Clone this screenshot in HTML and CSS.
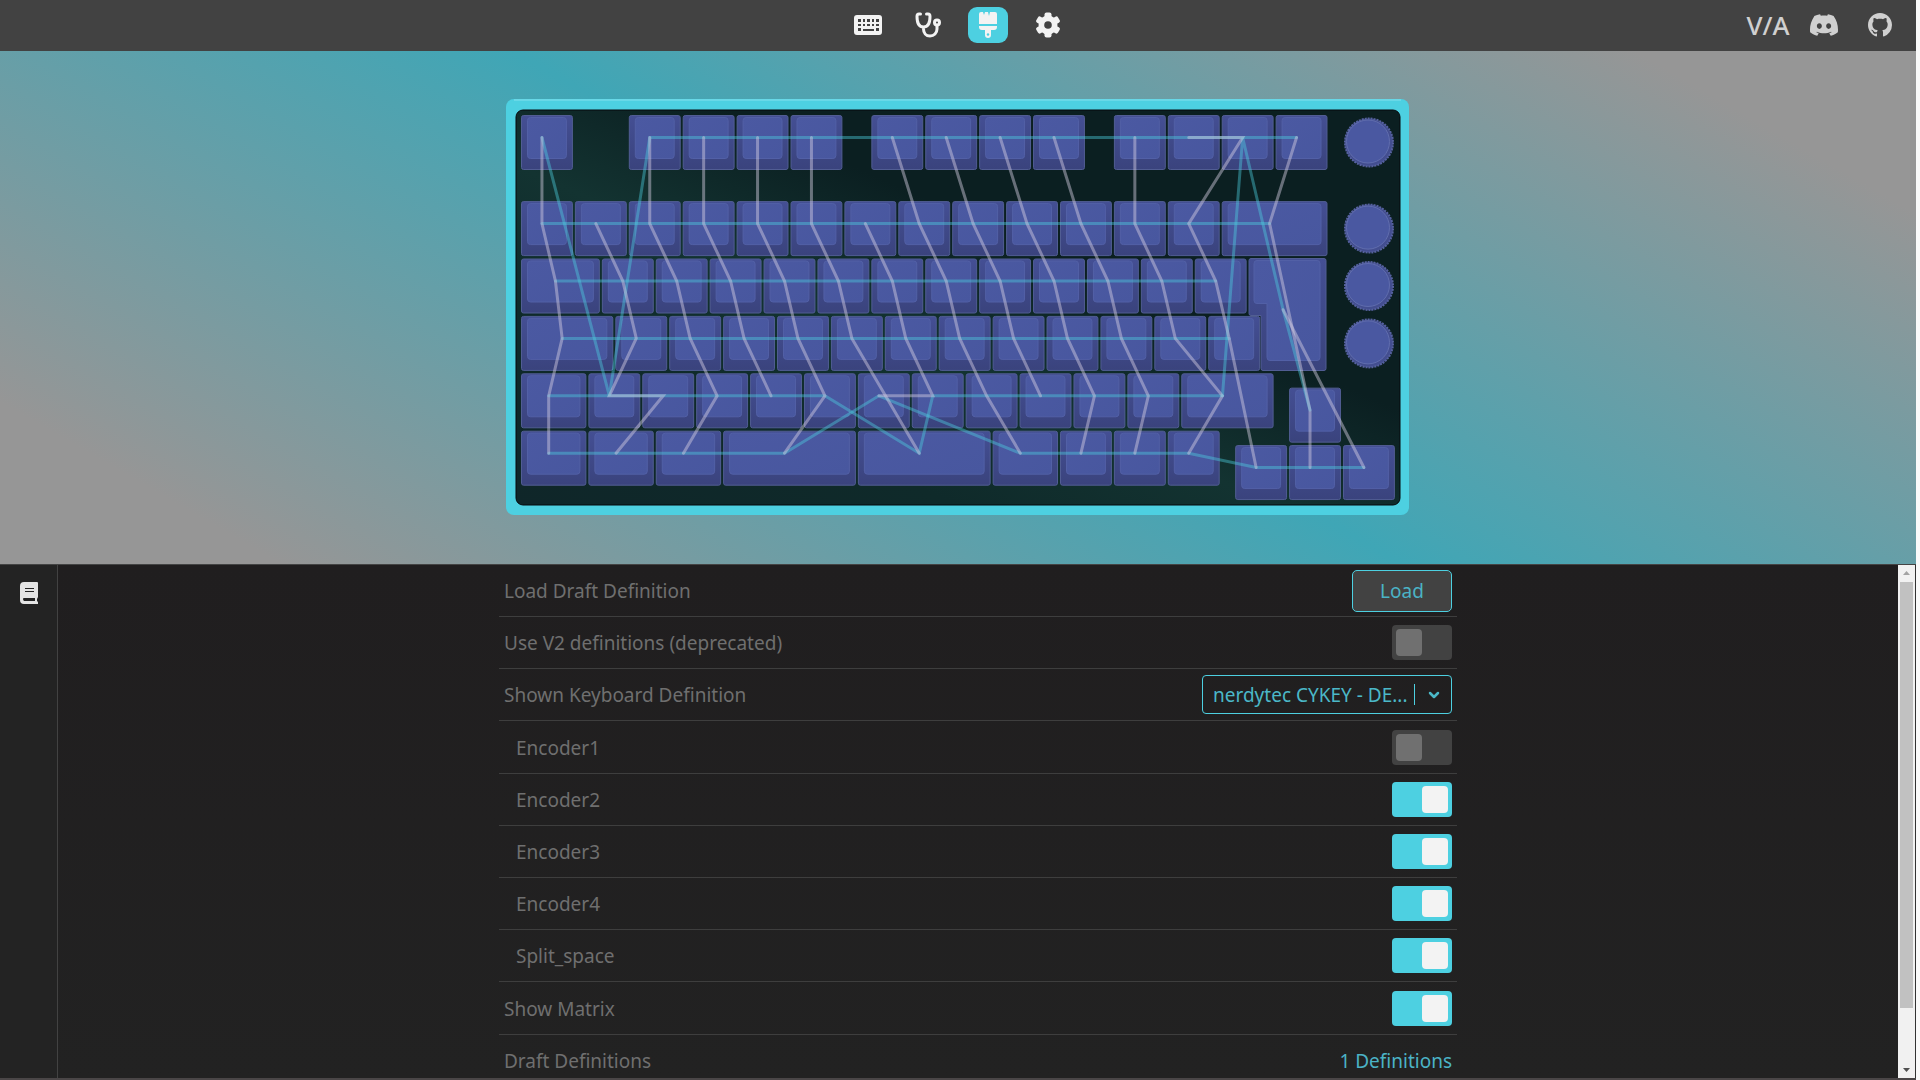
FILE: index.html
```html
<!DOCTYPE html>
<html lang="en">
<head>
<meta charset="utf-8">
<title>VIA</title>
<link rel="stylesheet" href="styles.css">
</head>
<body>
<div class="app">
  <header class="topbar">
    <span></span>
    <nav class="tabs">
      <a class="tab" href="#configure" aria-label="Configure">
        <svg width="28" height="20" viewBox="0 0 28 20"><path fill="currentColor" fill-rule="evenodd" d="M3 0h22a3 3 0 0 1 3 3v14a3 3 0 0 1-3 3H3a3 3 0 0 1-3-3V3a3 3 0 0 1 3-3zM4 4v3h3V4zm5 0v3h2V4zm4 0v3h3V4zm5 0v3h2V4zm4 0v3h3V4zM4 9v2h3V9zm5 0v2h2V9zm4 0v2h3V9zm5 0v2h2V9zm4 0v2h3V9zM4 13v3h3v-3zm5 1v2h11v-2zm13-1v3h3v-3z"/></svg>
      </a>
      <a class="tab" href="#test" aria-label="Key tester">
        <svg width="26" height="26" viewBox="0 0 26 26" fill="none" stroke="currentColor" stroke-width="3" stroke-linecap="round"><path d="M5.500 2H4Q2 2 2 4.500C2 11 4 15 8.500 15S15 11 15 4.500Q15 2 13 2h-1.500M8.500 15v2c0 4 2.500 7 6.500 7s7-3 7-7v-3"/><circle cx="22" cy="10.500" r="2.500"/></svg>
      </a>
      <a class="tab tab-active" href="#design" aria-label="Design" aria-current="page">
        <svg width="18" height="26" viewBox="0 0 18 26" fill="currentColor"><path d="M0 12V2Q0 0 2 0h2l1 3 1-3h3l1 4 1-4h5q2 0 2 2v10zM0 14h18v1q0 3-3 3h-3v5a3 3 0 0 1-6 0v-5H3q-3 0-3-3z"/><circle cx="9" cy="22.500" r="1.200" fill="#4dd0e1"/></svg>
      </a>
      <a class="tab" href="#settings" aria-label="Settings">
        <svg width="24" height="26" viewBox="-12 -13 24 26"><g fill="currentColor"><circle r="9.500"/><rect x="-3.500" y="-12.500" width="7" height="25" rx="2"/><rect x="-3.500" y="-12.500" width="7" height="25" rx="2" transform="rotate(60)"/><rect x="-3.500" y="-12.500" width="7" height="25" rx="2" transform="rotate(120)"/></g><circle r="3.800" fill="#424242"/></svg>
      </a>
    </nav>
    <div class="links">
      <a class="brand" href="#via" aria-label="VIA">V/A</a>
      <a href="#discord" aria-label="Discord">
        <svg width="28" height="28" viewBox="0 0 24 24" fill="currentColor"><path d="M20.317 4.370a19.791 19.791 0 00-4.885-1.515.074.074 0 00-.079.037c-.211.375-.445.865-.608 1.249-1.845-.276-3.680-.276-5.487 0-.164-.393-.406-.874-.618-1.249a.077.077 0 00-.079-.037 19.736 19.736 0 00-4.885 1.515.070.070 0 00-.032.028C.533 9.046-.319 13.580.099 18.058a.082.082 0 00.031.056c2.053 1.508 4.041 2.423 5.993 3.029a.078.078 0 00.084-.028c.462-.630.873-1.295 1.226-1.994a.076.076 0 00-.042-.106c-.653-.248-1.274-.550-1.872-.892a.077.077 0 01-.008-.128c.126-.094.252-.192.372-.291a.074.074 0 01.078-.011c3.928 1.793 8.180 1.793 12.061 0a.074.074 0 01.079.010c.120.099.246.198.373.292a.077.077 0 01-.007.128 12.299 12.299 0 01-1.873.891.077.077 0 00-.041.107c.360.698.772 1.363 1.225 1.993a.076.076 0 00.084.029c1.961-.607 3.950-1.522 6.002-3.029a.077.077 0 00.031-.055c.500-5.177-.838-9.674-3.549-13.660a.061.061 0 00-.031-.029zM8.020 15.331c-1.183 0-2.157-1.086-2.157-2.419 0-1.333.956-2.419 2.157-2.419 1.211 0 2.176 1.095 2.157 2.419 0 1.333-.956 2.419-2.157 2.419zm7.975 0c-1.183 0-2.157-1.086-2.157-2.419 0-1.333.955-2.419 2.157-2.419 1.211 0 2.176 1.095 2.157 2.419 0 1.333-.946 2.419-2.157 2.419z"/></svg>
      </a>
      <a href="#github" aria-label="GitHub">
        <svg width="24" height="24" viewBox="0 0 16 16" fill="currentColor"><path d="M8 0C3.580 0 0 3.580 0 8c0 3.540 2.290 6.530 5.470 7.590.4.070.55-.17.55-.38 0-.19-.01-.82-.01-1.490-2.010.37-2.530-.49-2.690-.94-.09-.23-.48-.94-.82-1.130-.28-.15-.68-.52-.01-.53.63-.01 1.080.58 1.230.82.72 1.210 1.870.87 2.330.66.07-.52.28-.87.51-1.070-1.780-.2-3.640-.89-3.640-3.950 0-.87.31-1.590.82-2.150-.08-.2-.36-1.020.08-2.120 0 0 .67-.21 2.200.82.64-.18 1.320-.27 2-.27s1.360.09 2 .27c1.530-1.040 2.200-.82 2.200-.82.44 1.100.16 1.920.08 2.120.51.56.82 1.270.82 2.150 0 3.070-1.870 3.750-3.650 3.950.29.25.54.73.54 1.480 0 1.070-.01 1.930-.01 2.200 0 .21.15.46.55.38A8.010 8.010 0 0 0 16 8c0-4.420-3.580-8-8-8z"/></svg>
      </a>
    </div>
  </header>

  <section class="stage">
    <svg class="board" id="board" width="903" height="416" viewBox="0 0 903 416" role="img" aria-label="Keyboard matrix">
      <defs>
        <linearGradient id="plate" x1="0" y1="1" x2="1" y2="0"><stop offset="0" stop-color="#0f2629"/><stop offset="0.250" stop-color="#0f2a2a"/><stop offset="0.430" stop-color="#133331"/><stop offset="0.620" stop-color="#0b1f21"/><stop offset="1" stop-color="#0b1f21"/></linearGradient>
        <linearGradient id="side" x1="0" y1="0" x2="0" y2="1"><stop offset="0" stop-color="#444f94"/><stop offset="1" stop-color="#3a437d"/></linearGradient>
        <linearGradient id="face" x1="0" y1="0" x2="1" y2="1"><stop offset="0" stop-color="#4b59a2"/><stop offset="1" stop-color="#48579f"/></linearGradient>
      </defs>
      <rect width="903" height="416" rx="8" fill="#4dd0e1"/>
      <path d="M8 1H895" stroke="#68d8e7" stroke-width="2"/>
      <rect x="10" y="11" width="884" height="395" rx="7" fill="url(#plate)" stroke="#06090c" stroke-width="1"/>
    </svg>
  </section>

  <section class="panel">
    <aside class="rail">
      <button class="rail-button" aria-label="Definitions">
        <svg width="18" height="22" viewBox="0 0 18 22"><path fill="currentColor" fill-rule="evenodd" d="M4 0h13q1 0 1 1v14l-1 2v2l1 1v2H4q-4 0-4-4V4q0-4 4-4zm1 6v1h9V6zm0 3v1h9V9zM4 16q-1 0-1 1t1 2h11v-3z"/></svg>
      </button>
    </aside>
    <main class="content">
      <form class="settings">
        <div class="row"><span>Load Draft Definition</span><button type="button" class="load">Load</button></div>
        <div class="row"><label for="v2">Use V2 definitions (deprecated)</label><input class="switch" type="checkbox" id="v2"></div>
        <div class="row"><label for="definition">Shown Keyboard Definition</label>
          <div class="picker">
            <select id="definition"><option>nerdytec CYKEY - DE...</option></select>
            <span class="picker-mark"><svg width="12" height="8" viewBox="0 0 12 8" fill="none" stroke="currentColor" stroke-width="2.500" stroke-linecap="round" stroke-linejoin="round"><path d="M2 2l4 4 4-4"/></svg></span>
          </div>
        </div>
        <div class="nested">
          <div class="row"><label for="e1">Encoder1</label><input class="switch" type="checkbox" id="e1"></div>
          <div class="row"><label for="e2">Encoder2</label><input class="switch" type="checkbox" id="e2" checked></div>
          <div class="row"><label for="e3">Encoder3</label><input class="switch" type="checkbox" id="e3" checked></div>
          <div class="row"><label for="e4">Encoder4</label><input class="switch" type="checkbox" id="e4" checked></div>
          <div class="row"><label for="split">Split_space</label><input class="switch" type="checkbox" id="split" checked></div>
        </div>
        <div class="row"><label for="matrix">Show Matrix</label><input class="switch" type="checkbox" id="matrix" checked></div>
        <div class="row"><span>Draft Definitions</span><span class="count">1 Definitions</span></div>
      </form>
    </main>
    <div class="scrollbar" aria-hidden="true">
      <svg width="17" height="17" viewBox="0 0 17 17"><path d="M5 10l3.500-4 3.500 4z" fill="#a3a3a3"/></svg>
      <div class="scroll-track"><div class="scroll-thumb"></div></div>
      <svg width="17" height="17" viewBox="0 0 17 17"><path d="M5 7l3.500 4L12 7z" fill="#505050"/></svg>
    </div>
  </section>
</div>
<script src="board.js"></script>
</body>
</html>
```
FILE: styles.css
```css
* { box-sizing: border-box; }

body {
  margin: 0;
  background: #fafafa;
  font-family: "Noto Sans", "Open Sans", sans-serif;
  font-size: 19px;
  line-height: 24px;
  color: #6f6f6f;
}

.app {
  display: flex;
  flex-direction: column;
  height: 100vh;
  margin-right: 4px;
  border-bottom: 2px solid #4a4647;
  background: #222;
  overflow: hidden;
}

.topbar {
  display: grid;
  grid-template-columns: 1fr auto 1fr;
  align-items: center;
  flex: none;
  height: 51px;
  padding-bottom: 1px;
  background: #424242;
}

.tabs { display: flex; gap: 20px; }

.tab {
  display: flex;
  align-items: center;
  justify-content: center;
  width: 40px;
  height: 36px;
  border-radius: 9px;
  color: #f3f3f3;
}

.tab-active { background: #4dd0e1; }

.links {
  display: grid;
  grid-template-columns: repeat(3, 56px);
  align-items: center;
  justify-content: end;
  padding-right: 8px;
}

.links a { display: flex; justify-content: center; color: #d0d0d0; }

.links .brand {
  font: 500 26px/32px "Noto Sans", sans-serif;
  text-decoration: none;
}

.stage {
  display: flex;
  justify-content: center;
  flex: none;
  padding: 48px 2px 49px 0;
  border-bottom: 1px solid #444;
  background: linear-gradient(30deg, #969696 10%, #3fa6b6 50%, #969696 90%);
}

.board { display: block; }

.key-side { fill: url(#side); stroke: #515d93; stroke-width: 1; }
.key-face { fill: url(#face); stroke: #5260a6; stroke-width: 1; }
.knob-edge { fill: #434e90; stroke: #56619f; stroke-width: 2; stroke-dasharray: 2 1; }
.knob-face { fill: #4a58a1; stroke: #606dae; stroke-width: 1; }
.wire { fill: none; stroke-width: 3; stroke-linecap: round; }
.wire-column { stroke: rgba(214, 208, 226, 0.46); }
.wire-row { stroke: rgba(77, 208, 225, 0.42); }

.panel { display: flex; flex: 1; min-height: 0; }

.rail {
  flex: none;
  width: 58px;
  padding-top: 17px;
  border-right: 1px solid #424242;
  background: #232323;
}

.rail-button {
  display: flex;
  margin: 0 auto;
  padding: 0;
  border: 0;
  background: none;
  color: #e4e4e4;
}

.content {
  flex: 1;
  overflow: hidden;
  background: linear-gradient(#201e1f, #222);
}

.settings { max-width: 958px; margin: 0 auto; }

.row {
  display: flex;
  align-items: center;
  justify-content: space-between;
  height: 52px;
  padding: 0 5px;
  border-bottom: 1px solid #3e3e3e;
}

.nested { padding: 1px 0; }
.nested .row { padding-left: 17px; }

.load {
  width: 100px;
  height: 42px;
  border: 1px solid #4dd0e1;
  border-radius: 5px;
  background: #424242;
  color: #4bb3c6;
  font: inherit;
}

.switch {
  appearance: none;
  display: flex;
  align-items: center;
  width: 60px;
  height: 35px;
  margin: 0;
  padding: 4px;
  border-radius: 4px;
  background: #424242;
}

.switch::before {
  content: "";
  width: 26px;
  height: 27px;
  border-radius: 4px;
  background: #707070;
}

.switch:checked { justify-content: flex-end; background: #4dd0e1; }
.switch:checked::before { background: #f3f3f3; }

.picker { position: relative; width: 250px; height: 39px; color: #4bb8c8; }

.picker select {
  appearance: none;
  width: 100%;
  height: 100%;
  padding: 0 38px 0 10px;
  border: 1px solid #4dd0e1;
  border-radius: 4px;
  background: transparent;
  color: inherit;
  font: inherit;
}

.picker-mark {
  position: absolute;
  top: 9px;
  right: 0;
  display: flex;
  align-items: center;
  justify-content: center;
  width: 38px;
  height: 21px;
  border-left: 1px solid #4dd0e1;
  pointer-events: none;
}

.count { color: #4bb3c6; }

.scrollbar {
  display: flex;
  flex-direction: column;
  flex: none;
  width: 18px;
  border-right: 1px solid #333;
  background: #f1f1f1;
}

.scroll-track { flex: 1; padding: 0 2px; }
.scroll-thumb { height: 89%; background: #c1c1c1; }
```
FILE: board.js
```js
const NS = "http://www.w3.org/2000/svg";
const board = document.getElementById("board");

// Size of one key unit, and the corner of the first key.
const UX = 53.900, UY = 57.400, LEFT = 15, TOP = 16;

function add(tag, attrs) {
  const el = document.createElementNS(NS, tag);
  for (const name in attrs) el.setAttribute(name, attrs[name]);
  board.appendChild(el);
}

function key(x, y, w) {
  const px = LEFT + x * UX, py = TOP + y * UY, pw = w * UX;
  add("rect", { class: "key-side", x: px + 0.5, y: py + 0.5, width: pw - 3, height: 54, rx: 2 });
  add("rect", { class: "key-face", x: px + 6.5, y: py + 2.5, width: pw - 15, height: 41, rx: 3 });
}

function run(x, y, count) {
  for (let i = 0; i < count; i++) key(x + i, y, 1);
}

function knob(y) {
  const cy = TOP + y * UY + 27.5;
  add("circle", { class: "knob-edge", cx: 863, cy, r: 24 });
  add("circle", { class: "knob-face", cx: 862, cy: cy - 1, r: 21.5 });
}

key(0, 0, 1); run(2, 0, 4); run(6.5, 0, 4); run(11, 0, 4);
run(0, 1.5, 13); key(13, 1.5, 2);
key(0, 2.5, 1.5); run(1.5, 2.5, 12);
key(0, 3.5, 1.75); run(1.75, 3.5, 12);
key(0, 4.5, 1.25); run(1.25, 4.5, 11); key(12.25, 4.5, 1.75);
[0, 1.25, 2.5].forEach(x => key(x, 5.5, 1.25));
key(3.75, 5.5, 2.5); key(6.25, 5.5, 2.5); key(8.75, 5.5, 1.25); run(10, 5.5, 3);
key(14.25, 4.75, 1); run(13.25, 5.75, 3);

// ISO enter
add("path", { class: "key-side", d: "M745 159.500h73q2 0 2 2v108q0 2-2 2h-61q-2 0-2-2v-53h-10q-2 0-2-2v-53q0-2 2-2z" });
add("path", { class: "key-face", d: "M751 161.500h60q3 0 3 3v94q0 3-3 3h-47q-3 0-3-3v-54h-10q-3 0-3-3v-37q0-3 3-3z" });

[0, 1.5, 2.5, 3.5].forEach(knob);

function wire(kind, points) {
  const list = points.map(([u, y]) => `${9 + u * UX},${TOP + 22.5 + y * UY}`).join(" ");
  add("polyline", { class: `wire wire-${kind}`, points: list });
}

[
  [[0.5, 0], [1.75, 4.5], [2.5, 0], [14.5, 0]],
  [[13.125, 4.5], [13.5, 0], [14.25, 3], [14.75, 4.75]],
  [[0.5, 1.5], [14, 1.5]],
  [[0.75, 2.5], [13, 2.5]],
  [[0.875, 3.5], [13.25, 3.5]],
  [[0.625, 4.5], [5.75, 4.5], [7.5, 5.5], [7.75, 4.5], [13.125, 4.5]],
  [[0.625, 5.5], [5, 5.5], [6.75, 4.5], [9.375, 5.5], [12.5, 5.5], [13.75, 5.75], [15.75, 5.75]]
].forEach(points => wire("row", points));

[
  [[0.5, 0], [0.5, 1.5], [0.75, 2.5], [0.875, 3.5], [0.625, 4.5], [0.625, 5.5]],
  [[1.5, 1.5], [2, 2.5], [2.25, 3.5], [1.75, 4.5], [2.75, 4.5], [1.875, 5.5]],
  [[2.5, 0], [2.5, 1.5], [3, 2.5], [3.25, 3.5], [3.75, 4.5], [3.125, 5.5]],
  [[3.5, 0], [3.5, 1.5], [4, 2.5], [4.25, 3.5], [4.75, 4.5]],
  [[4.5, 0], [4.5, 1.5], [5, 2.5], [5.25, 3.5], [5.75, 4.5], [5, 5.5]],
  [[5.5, 0], [5.5, 1.5], [6, 2.5], [6.25, 3.5], [7.5, 5.5]],
  [[6.5, 1.5], [7, 2.5], [7.25, 3.5], [7.75, 4.5], [6.75, 4.5]],
  [[7, 0], [7.5, 1.5], [8, 2.5], [8.25, 3.5], [8.75, 4.5], [9.375, 5.5]],
  [[8, 0], [8.5, 1.5], [9, 2.5], [9.25, 3.5], [9.75, 4.5]],
  [[9, 0], [9.5, 1.5], [10, 2.5], [10.25, 3.5], [10.75, 4.5], [10.5, 5.5]],
  [[10, 0], [10.5, 1.5], [11, 2.5], [11.25, 3.5], [11.75, 4.5], [11.5, 5.5]],
  [[11.5, 0], [11.5, 1.5], [12, 2.5], [12.25, 3.5], [13.125, 4.5], [12.5, 5.5]],
  [[12.5, 0], [13.5, 0], [12.5, 1.5], [13, 2.5], [13.25, 3.5], [13.75, 5.75]],
  [[14.5, 0], [14, 1.5], [14.75, 4.75], [14.75, 5.75]],
  [[14.25, 3], [15.75, 5.75]]
].forEach(points => wire("column", points));
```
